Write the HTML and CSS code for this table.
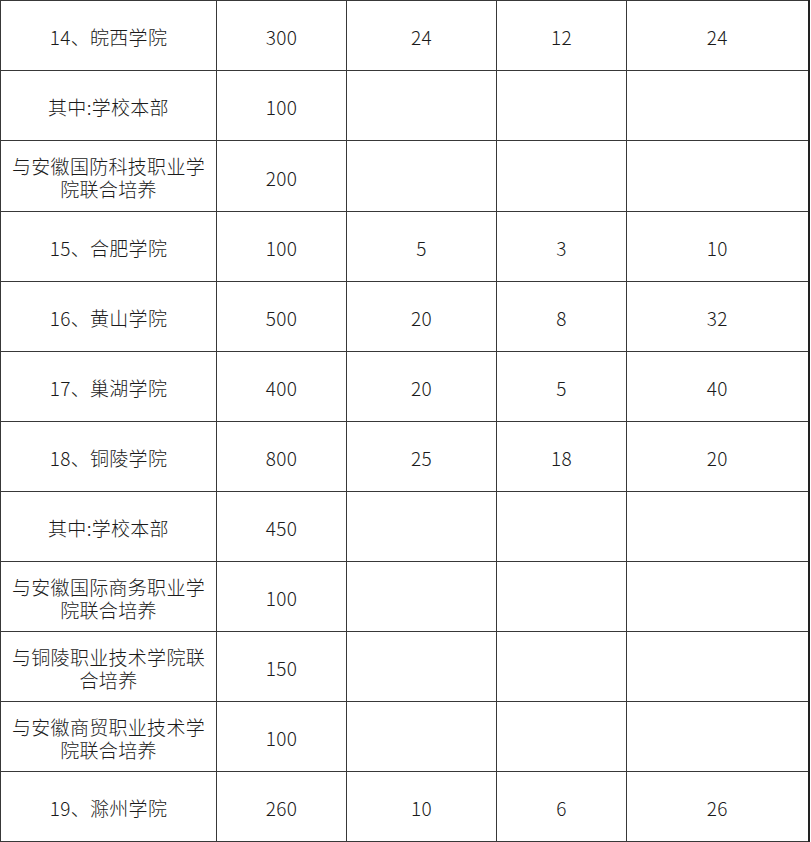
FILE: index.html
```html
<!DOCTYPE html>
<html lang="zh-CN">
<head>
<meta charset="utf-8">
<title>招生计划表</title>
<link rel="stylesheet" href="styles.css">
</head>
<body>
<table class="plan">
  <colgroup>
    <col class="c1"><col class="c2"><col class="c3"><col class="c4"><col class="c5">
  </colgroup>
  <tbody>
    <tr><td>14、皖西学院</td><td>300</td><td>24</td><td>12</td><td>24</td></tr>
    <tr><td>其中:学校本部</td><td>100</td><td></td><td></td><td></td></tr>
    <tr class="tall"><td>与安徽国防科技职业学院联合培养</td><td>200</td><td></td><td></td><td></td></tr>
    <tr><td>15、合肥学院</td><td>100</td><td>5</td><td>3</td><td>10</td></tr>
    <tr><td>16、黄山学院</td><td>500</td><td>20</td><td>8</td><td>32</td></tr>
    <tr><td>17、巢湖学院</td><td>400</td><td>20</td><td>5</td><td>40</td></tr>
    <tr><td>18、铜陵学院</td><td>800</td><td>25</td><td>18</td><td>20</td></tr>
    <tr><td>其中:学校本部</td><td>450</td><td></td><td></td><td></td></tr>
    <tr><td>与安徽国际商务职业学院联合培养</td><td>100</td><td></td><td></td><td></td></tr>
    <tr><td>与铜陵职业技术学院联合培养</td><td>150</td><td></td><td></td><td></td></tr>
    <tr><td>与安徽商贸职业技术学院联合培养</td><td>100</td><td></td><td></td><td></td></tr>
    <tr><td>19、滁州学院</td><td>260</td><td>10</td><td>6</td><td>26</td></tr>
  </tbody>
</table>
</body>
</html>
```

FILE: styles.css
```css
html, body {
  margin: 0;
  padding: 0;
  background: #ffffff;
}

.plan {
  border-collapse: collapse;
  table-layout: fixed;
  width: 808px;
  font-family: "Noto Sans CJK SC", "Noto Sans", sans-serif;
  font-size: 19px;
  font-weight: 300;
  line-height: 23px;
  color: #1a1a1a;
}

.plan .c1 { width: 216px; }
.plan .c2 { width: 130px; }
.plan .c3 { width: 150px; }
.plan .c4 { width: 130px; }
.plan .c5 { width: 182px; }

.plan td {
  height: 70px;
  box-sizing: border-box;
  border: 1px solid #383838;
  padding: 2px 5px 0 5px;
  text-align: center;
  vertical-align: middle;
  letter-spacing: 0.3px;
}

.plan .tall td {
  height: 71px;
}

.plan td:last-child {
  border-right: 2px solid #222222;
}
```
